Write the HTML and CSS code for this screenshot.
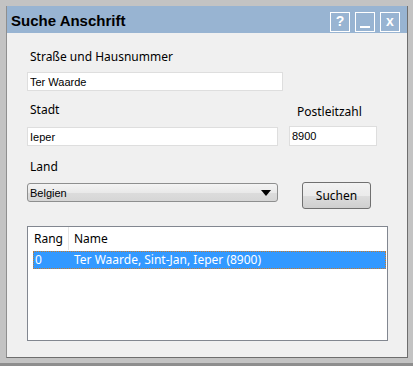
FILE: index.html
```html
<!DOCTYPE html>
<html lang="de">
  <head>
    <meta charset="UTF-8" />
    <title>Suche Anschrift</title>
    <link rel="stylesheet" href="styles.css">
  </head>
  <body>
    <div class="frame">
      <div class="window">
        <div class="titlebar">
          <span class="title">Suche Anschrift</span>
          <div class="tb-buttons">
            <span class="tb-btn">?</span>
            <span class="tb-btn"><i class="min-bar"></i></span>
            <span class="tb-btn">x</span>
          </div>
        </div>

        <div class="content">
          <label class="lbl">Straße und Hausnummer</label>
          <input class="field street" value="Ter Waarde" />

          <div class="row">
            <div class="col-left">
              <label class="lbl">Stadt</label>
              <input class="field city" value="Ieper" />
            </div>
            <div class="col-right">
              <label class="lbl lbl-plz">Postleitzahl</label>
              <input class="field plz" value="8900" />
            </div>
          </div>

          <div class="row">
            <div class="col-left">
              <label class="lbl lbl-land">Land</label>
              <div class="select">
                <span>Belgien</span>
                <i class="arrow"></i>
              </div>
            </div>
            <button class="btn-search">Suchen</button>
          </div>

          <!-- result list -->
          <div class="results">
            <div class="res-head">
              <span class="c-rang">Rang</span>
              <span class="c-name">Name</span>
            </div>
            <div class="res-row selected">
              <span class="c-rang">0</span>
              <span class="c-name">Ter Waarde, Sint-Jan, Ieper (8900)</span>
            </div>
          </div>
        </div>
      </div>
    </div>
  </body>
</html>
```

FILE: styles.css
```css
body {
  margin: 0;
  background: #c3c3c3;
  font-family: "Noto Sans", "Open Sans", sans-serif;
  color: #000;
}
.frame {
  width: 413px;
  height: 366px;
  box-sizing: border-box;
  padding: 6px 0 0 6px;
  border-bottom: 3px solid #8e8e8e;
}
.window {
  width: 402px;
  height: 352px;
  box-sizing: border-box;
  border-left: 1px solid #8f8f8f;
  border-right: 1px solid #6e6e6e;
  border-bottom: 1px solid #6e6e6e;
  background: #f0f0f0;
  display: flex;
  flex-direction: column;
}
.titlebar {
  height: 27px;
  background: #98b4d2;
  display: flex;
  align-items: center;
  justify-content: space-between;
  padding: 0 7px 0 4px;
}
.title {
  font-family: "Liberation Sans", Arial, sans-serif;
  font-weight: bold;
  font-size: 15px;
  margin-top: 1px;
}
.tb-buttons {
  display: flex;
  gap: 5px;
  margin-top: 4px;
}
.tb-btn {
  width: 20px;
  height: 20px;
  box-sizing: border-box;
  border: 1px solid #fff;
  color: #fff;
  font-family: "Liberation Sans", Arial, sans-serif;
  font-weight: bold;
  font-size: 14px;
  line-height: 16px;
  text-align: center;
  position: relative;
}
.min-bar {
  position: absolute;
  left: 4px;
  right: 4px;
  bottom: 3px;
  height: 2px;
  background: #fff;
}
.content {
  padding: 16px 0 0 20px;
}
.lbl {
  display: block;
  font-size: 12px;
  line-height: 16px;
  margin-left: 3px;
}
.field {
  display: block;
  box-sizing: border-box;
  height: 19px;
  border: 1px solid #dedede;
  background: #fff;
  padding: 0 2px;
  font-family: "Liberation Sans", Arial, sans-serif;
  font-size: 11px;
  color: #000;
  outline: none;
}
.street {
  width: 256px;
  margin-top: 7px;
}
.row {
  display: flex;
  align-items: flex-start;
}
.col-left {
  width: 251px;
}
.row .lbl {
  margin-top: 11px;
}
.city {
  width: 251px;
  margin-top: 9px;
}
.col-right {
  margin-left: 11px;
}
.row .lbl-plz {
  margin-top: 13px;
  margin-left: 8px;
}
.plz {
  width: 88px;
  height: 20px;
  margin-top: 6px;
}
.row .lbl-land {
  margin-top: 13px;
}
.select {
  box-sizing: border-box;
  width: 251px;
  height: 19px;
  margin-top: 8px;
  border: 1px solid #8e8f8f;
  border-radius: 3px;
  background: linear-gradient(#f4f4f4, #e9e9e9 50%, #dcdcdc 51%, #d6d6d6);
  display: flex;
  align-items: center;
  justify-content: space-between;
  padding: 0 6px 0 2px;
  font-family: "Liberation Sans", Arial, sans-serif;
  font-size: 11px;
}
.arrow {
  width: 0;
  height: 0;
  border-left: 5px solid transparent;
  border-right: 5px solid transparent;
  border-top: 6px solid #000;
}
.btn-search {
  box-sizing: border-box;
  width: 69px;
  height: 27px;
  margin: 36px 0 0 24px;
  border: 1px solid #707070;
  border-radius: 3px;
  background: linear-gradient(#f2f2f2, #ebebeb 50%, #dddddd 51%, #cfcfcf);
  font-family: "Noto Sans", sans-serif;
  font-size: 12px;
  padding: 0;
}
.results {
  box-sizing: border-box;
  width: 361px;
  height: 115px;
  margin-top: 17px;
  border: 1px solid #828790;
  background: #fff;
  padding: 0 1px 0 5px;
  font-size: 12px;
}
.res-head,
.res-row {
  display: flex;
  line-height: 16px;
}
.res-head {
  height: 23px;
  align-items: center;
}
.res-head .c-rang {
  border-right: 1px solid #e5e5e5;
  height: 23px;
  line-height: 23px;
}
.c-rang {
  width: 34px;
  padding-left: 1px;
}
.c-name {
  padding-left: 5px;
}
.res-row {
  height: 18px;
  box-sizing: border-box;
  margin-top: 1px;
  align-items: center;
}
.selected {
  background: #3399ff;
  color: #fff;
  border: 1px dotted #c87a2a;
}
```
